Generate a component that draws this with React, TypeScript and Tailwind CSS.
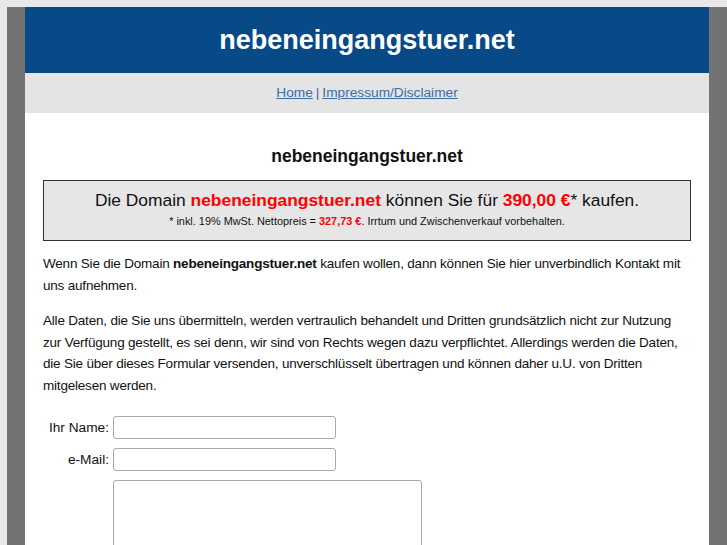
import React from "react";

export default function App() {
  return (
    <div className="min-h-[545px] w-full overflow-hidden bg-[#e8e8e8] pt-[7px] pl-[7px]" style={{ fontFamily: '"Liberation Sans", Arial, sans-serif' }}>
      <div className="w-[720px] border-x-[18px] border-[#737373] bg-white">
        <div className="flex h-[66px] items-center justify-center bg-[#084a87]">
          <h1 className="text-[27px] font-bold text-white">nebeneingangstuer.net</h1>
        </div>
        <div className="flex h-[40px] items-center justify-center bg-[#e4e4e4] text-[13.7px] text-[#3a6ea5]">
          <a href="#" className="underline">Home</a>
          <span className="mx-[3px]">|</span>
          <a href="#" className="underline">Impressum/Disclaimer</a>
        </div>
        <div className="px-[18px] pt-[33px] pb-10 text-[13.7px] leading-[21.5px] text-[#111]">
          <h2 className="mb-[14px] text-center text-[17.5px] font-bold leading-[20px]">nebeneingangstuer.net</h2>
          <div className="border border-[#333] bg-[#e6e6e6] pt-[8px] pb-[11px] text-center">
            <div className="text-[17.4px] leading-[22px]">
              Die Domain <b className="text-[#ff0000]">nebeneingangstuer.net</b> können Sie für <b className="text-[#ff0000]">390,00 €</b>* kaufen.
            </div>
            <div className="mt-[2px] text-[10.9px] leading-[16px]">
              * inkl. 19% MwSt. Nettopreis = <b className="text-[#ff0000]">327,73 €</b>. Irrtum und Zwischenverkauf vorbehalten.
            </div>
          </div>
          <p className="mt-[12px] text-[13.5px] tracking-[-0.2px]">
            Wenn Sie die Domain <b>nebeneingangstuer.net</b> kaufen wollen, dann können Sie hier unverbindlich Kontakt mit uns aufnehmen.
          </p>
          <p className="mt-[14px] text-[13.5px] tracking-[-0.2px]">
            Alle Daten, die Sie uns übermitteln, werden vertraulich behandelt und Dritten grundsätzlich nicht zur Nutzung zur Verfügung gestellt, es sei denn, wir sind von Rechts wegen dazu verpflichtet. Allerdings werden die Daten, die Sie über dieses Formular versenden, unverschlüsselt übertragen und können daher u.U. von Dritten mitgelesen werden.
          </p>
          <div className="mt-[20px] grid grid-cols-[66px_auto] items-center gap-x-[4px] gap-y-[9px]">
            <label className="text-right">Ihr Name:</label>
            <input className="h-[23px] w-[223px] rounded-[3px] border border-[#aaa] bg-white" />
            <label className="text-right">e-Mail:</label>
            <input className="h-[23px] w-[223px] rounded-[3px] border border-[#aaa] bg-white" />
            <span />
            <textarea className="h-[110px] w-[309px] rounded-[3px] border border-[#aaa] bg-white" />
          </div>
        </div>
      </div>
    </div>
  );
}
